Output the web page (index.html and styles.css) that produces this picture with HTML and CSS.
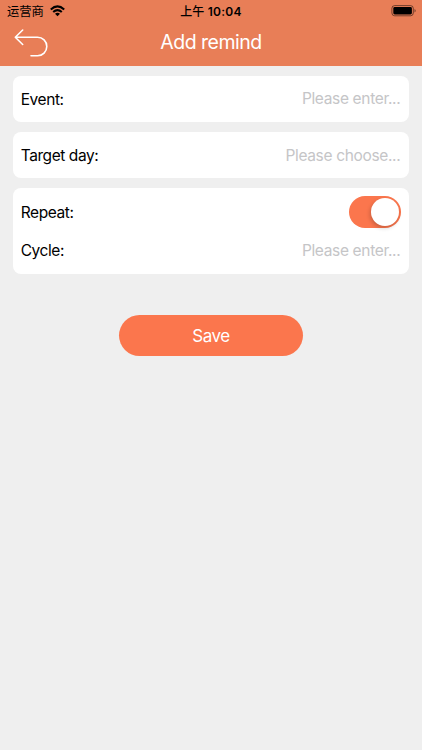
FILE: index.html
```html
<!DOCTYPE html>
<html lang="en">
<head>
<meta charset="utf-8">
<meta name="viewport" content="width=device-width">
<title>Add remind</title>
<link rel="stylesheet" href="styles.css">
</head>
<body>
<header class="header">
  <div class="status">
    <div class="carrier"><span lang="zh-CN">运营商</span>
      <svg class="wifi" width="15" height="12" viewBox="0 0 15 12" fill="none" stroke="#000" stroke-width="2"><path d="M.8 4.5Q7.5-1.8 14.2 4.5M3.2 7.1Q7.5 3.1 11.8 7.1"/><path d="M7.5 11.2 5 8.8Q7.5 6.8 10 8.8Z" fill="#000" stroke="none"/></svg>
    </div>
    <div class="time"><span lang="zh-CN">上午</span> 10:04</div>
    <svg class="battery" width="26" height="12" viewBox="0 0 26 12"><rect x=".9" y=".6" width="21.4" height="10.2" rx="2.8" fill="none" stroke="#000" stroke-opacity=".5"/><rect x="2.3" y="2" width="18.6" height="7.4" rx="1.4"/><path d="M23.5 4v3.6q1.2-.5 1.2-1.8T23.5 4Z" fill-opacity=".5"/></svg>
  </div>
  <div class="nav">
    <svg class="back" width="36" height="30" viewBox="0 0 36 30" fill="none" stroke="#fff" stroke-width="1.6" stroke-linecap="round" stroke-linejoin="round"><path d="M9.7 2 2.3 9.2l7.4 7.3M2.3 9.2h22.2a9.3 9.3 0 0 1 0 18.6H18"/></svg>
    <h1 class="title">Add remind</h1>
  </div>
</header>
<main class="form">
  <section class="card"><div class="row"><span class="label">Event:</span><span class="hint">Please enter...</span></div></section>
  <section class="card"><div class="row"><span class="label">Target day:</span><span class="hint choose">Please choose...</span></div></section>
  <section class="card group">
    <div class="row"><span class="label">Repeat:</span><span class="switch"><span class="knob"></span></span></div>
    <div class="row"><span class="label">Cycle:</span><span class="hint">Please enter...</span></div>
  </section>
  <button class="save">Save</button>
</main>
</body>
</html>
```
FILE: styles.css
```css
* { box-sizing: border-box; }
body { margin: 0; min-height: 750px; background: #efefef; color: #000; font-family: Inter, "Noto Sans CJK SC", sans-serif; }
.header { height: 65.5px; background: #e87e57; }
.status { height: 22px; display: grid; grid-template-columns: 1fr auto 1fr; align-items: center; padding: 0 5px 0 7px; font-size: 12px; line-height: 22px; }
.carrier { display: flex; align-items: center; gap: 6px; padding-top: 1px; font-size: 12.3px; }
.wifi { margin-top: -3px; }
.time { font-weight: 600; letter-spacing: .25px; padding-top: 1px; margin-left: -2px; }
.time span { font-weight: 500; letter-spacing: 0; }
.battery { justify-self: end; margin-top: -1px; }
.nav { height: 43px; display: grid; grid-template-columns: 36px 1fr 36px; align-items: center; padding: 0 13px; }
.back { margin-top: -1px; }
.title { margin: -3px 0 0; text-align: center; color: #fff; font-size: 19.5px; line-height: 24px; font-weight: 400; letter-spacing: -.52px; }
.form { display: flex; flex-direction: column; gap: 10px; padding: 10px 12.7px; }
.card { height: 46px; border-radius: 8px; background: #fff; padding: 0 8px; }
.row { height: 46px; display: flex; align-items: center; justify-content: space-between; font-size: 15.5px; }
.label { letter-spacing: -.42px; padding-top: 1px; }
.hint { color: #c5c5c7; padding-right: 1px; letter-spacing: -.34px; }
.choose { padding-top: 1px; }
.group { height: 86.5px; padding-top: 2px; }
.group .row { height: 45px; }
.group .row + .row { height: 32px; }
.group .label { padding-top: 0; }
.switch { width: 52px; height: 32px; padding: 2px; border-radius: 16px; background: #fb764d; display: flex; justify-content: flex-end; }
.knob { width: 28px; height: 28px; border-radius: 50%; background: #fff; box-shadow: -1px 2px 4px rgba(0,0,0,.2); }
.save { align-self: center; width: 183.5px; height: 40.5px; margin-top: 31px; padding: 2px 0 0; border: 0; border-radius: 21px; background: #fb764d; color: #fff; font: 400 17px Inter, sans-serif; letter-spacing: -.5px; }
```
